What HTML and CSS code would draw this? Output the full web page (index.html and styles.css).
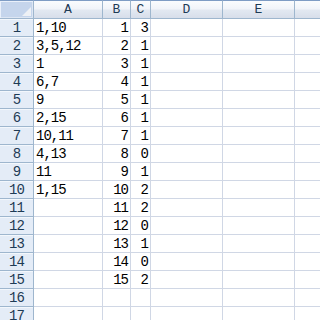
FILE: index.html
```html
<!DOCTYPE html>
<html>
<head>
<meta charset="utf-8">
<link rel="stylesheet" href="styles.css">
</head>
<body>
<div class="sheet">
  <div class="corner"><span class="tri"></span></div>
  <div class="ch">A</div><div class="ch">B</div><div class="ch">C</div><div class="ch">D</div><div class="ch">E</div><div class="ch last"></div>

  <div class="rh">1</div><div class="c l">1,10</div><div class="c r">1</div><div class="c r">3</div><div class="c"></div><div class="c"></div><div class="c"></div>
  <div class="rh">2</div><div class="c l">3,5,12</div><div class="c r">2</div><div class="c r">1</div><div class="c"></div><div class="c"></div><div class="c"></div>
  <div class="rh">3</div><div class="c l">1</div><div class="c r">3</div><div class="c r">1</div><div class="c"></div><div class="c"></div><div class="c"></div>
  <div class="rh">4</div><div class="c l">6,7</div><div class="c r">4</div><div class="c r">1</div><div class="c"></div><div class="c"></div><div class="c"></div>
  <div class="rh">5</div><div class="c l">9</div><div class="c r">5</div><div class="c r">1</div><div class="c"></div><div class="c"></div><div class="c"></div>
  <div class="rh">6</div><div class="c l">2,15</div><div class="c r">6</div><div class="c r">1</div><div class="c"></div><div class="c"></div><div class="c"></div>
  <div class="rh">7</div><div class="c l">10,11</div><div class="c r">7</div><div class="c r">1</div><div class="c"></div><div class="c"></div><div class="c"></div>
  <div class="rh">8</div><div class="c l">4,13</div><div class="c r">8</div><div class="c r">0</div><div class="c"></div><div class="c"></div><div class="c"></div>
  <div class="rh">9</div><div class="c l">11</div><div class="c r">9</div><div class="c r">1</div><div class="c"></div><div class="c"></div><div class="c"></div>
  <div class="rh">10</div><div class="c l">1,15</div><div class="c r">10</div><div class="c r">2</div><div class="c"></div><div class="c"></div><div class="c"></div>
  <div class="rh">11</div><div class="c l"></div><div class="c r">11</div><div class="c r">2</div><div class="c"></div><div class="c"></div><div class="c"></div>
  <div class="rh">12</div><div class="c l"></div><div class="c r">12</div><div class="c r">0</div><div class="c"></div><div class="c"></div><div class="c"></div>
  <div class="rh">13</div><div class="c l"></div><div class="c r">13</div><div class="c r">1</div><div class="c"></div><div class="c"></div><div class="c"></div>
  <div class="rh">14</div><div class="c l"></div><div class="c r">14</div><div class="c r">0</div><div class="c"></div><div class="c"></div><div class="c"></div>
  <div class="rh">15</div><div class="c l"></div><div class="c r">15</div><div class="c r">2</div><div class="c"></div><div class="c"></div><div class="c"></div>
  <div class="rh">16</div><div class="c l"></div><div class="c r"></div><div class="c r"></div><div class="c"></div><div class="c"></div><div class="c"></div>
  <div class="rh">17</div><div class="c l"></div><div class="c r"></div><div class="c r"></div><div class="c"></div><div class="c"></div><div class="c"></div>
</div>
</body>
</html>
```

FILE: styles.css
```css
html, body {
  margin: 0;
  padding: 0;
  background: #ffffff;
  overflow: hidden;
}

.sheet {
  display: grid;
  grid-template-columns: 34px 69px 28px 20px 72px 72px 40px;
  grid-template-rows: 19px repeat(17, 18px);
  width: 335px;
  font-family: "Liberation Mono", "DejaVu Sans Mono", monospace;
  font-size: 14px;
  letter-spacing: -1px;
}

.corner {
  position: relative;
  box-sizing: border-box;
  background: #c5d5ec;
  border-top: 1px solid #7e9cc4;
  border-right: 1px solid #9eb6ce;
  border-bottom: 1px solid #9eb6ce;
  box-shadow: inset 1px 1px 0 #e9f0fa, inset -1px -1px 0 #dde6f3;
}

.tri {
  position: absolute;
  right: 2px;
  bottom: 2px;
  width: 0;
  height: 0;
  border-left: 9px solid transparent;
  border-bottom: 9px solid #eef1f5;
}

.ch {
  box-sizing: border-box;
  background: linear-gradient(#fafcfe 0%, #f1f4f9 45%, #e2e8f1 55%, #d7deea 100%);
  border-top: 1px solid #7e9cc4;
  border-right: 1px solid #9eb6ce;
  border-bottom: 1px solid #9eb6ce;
  color: #1e3b55;
  text-align: center;
  line-height: 17px;
  font-size: 13px;
  letter-spacing: 0;
}

.ch.last {
  border-right: none;
}

.rh {
  box-sizing: border-box;
  background: #e4ecf7;
  border-right: 1px solid #9eb6ce;
  border-bottom: 1px solid #9eb6ce;
  box-shadow: inset 0 1px 0 #f3f7fc;
  color: #1e3b55;
  text-align: center;
  line-height: 19px;
}

.c {
  box-sizing: border-box;
  border-right: 1px solid #d0d7e5;
  border-bottom: 1px solid #d0d7e5;
  color: #000000;
  line-height: 19px;
  white-space: nowrap;
  overflow: hidden;
}

.c.l {
  padding-left: 2px;
  text-align: left;
}

.c.r {
  padding-right: 2px;
  text-align: right;
}
```
